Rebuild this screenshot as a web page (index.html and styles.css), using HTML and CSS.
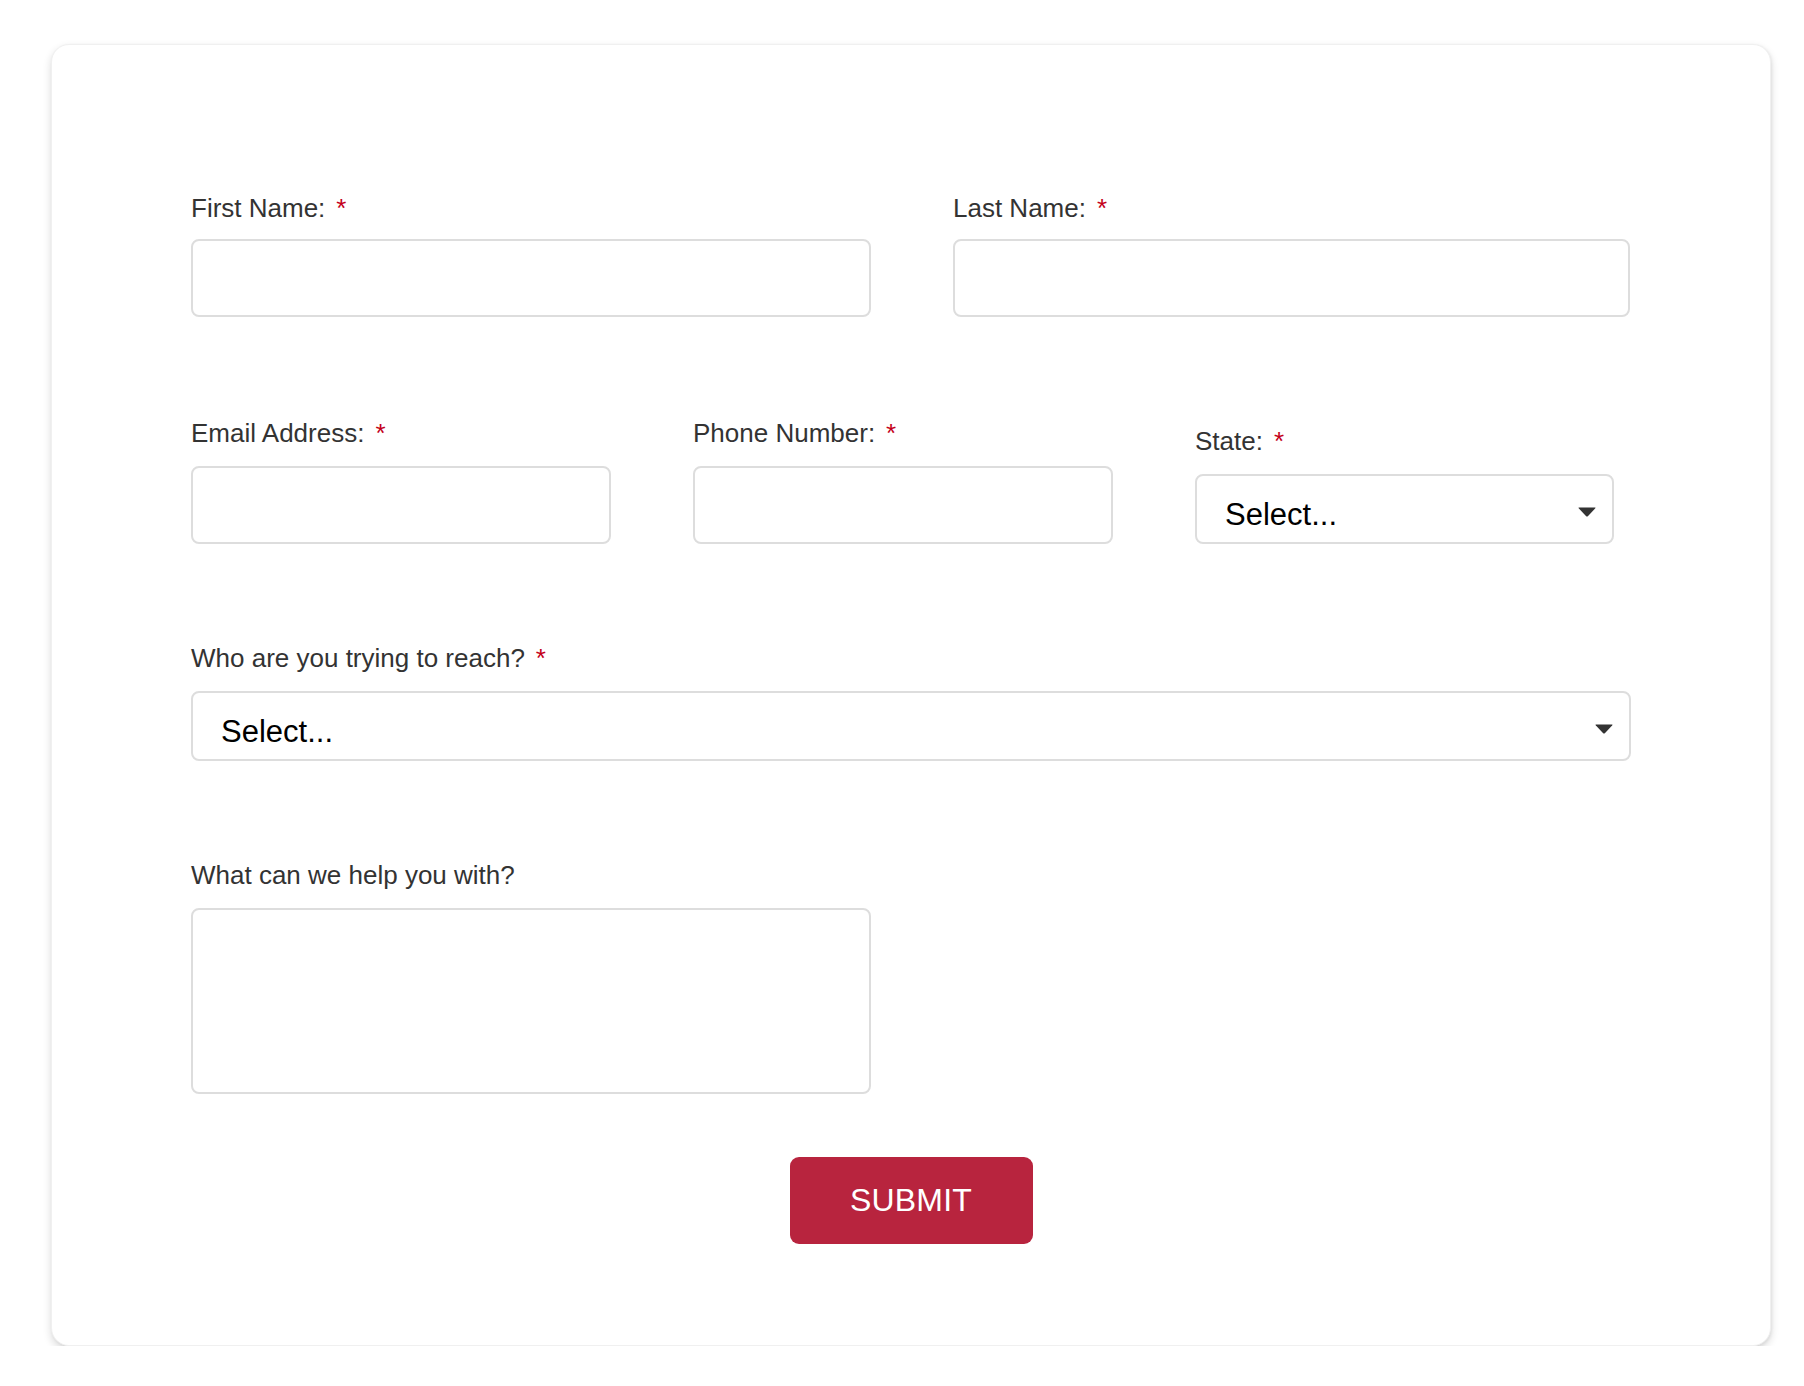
FILE: index.html
```html
<!DOCTYPE html>
<html lang="en">
<head>
<meta charset="utf-8">
<title>Contact Form</title>
<link rel="stylesheet" href="styles.css">
</head>
<body>
<form class="card">
  <div class="row row-two">
    <div class="field">
      <label class="label">First Name:<span class="req">*</span></label>
      <input class="input" type="text">
    </div>
    <div class="field">
      <label class="label">Last Name:<span class="req">*</span></label>
      <input class="input" type="text">
    </div>
  </div>
  <div class="row row-three">
    <div class="field">
      <label class="label">Email Address:<span class="req">*</span></label>
      <input class="input" type="email">
    </div>
    <div class="field">
      <label class="label">Phone Number:<span class="req">*</span></label>
      <input class="input" type="tel">
    </div>
    <div class="field">
      <label class="label">State:<span class="req">*</span></label>
      <div class="select-wrap">
        <select class="select"><option>Select...</option></select>
        <svg class="arrow" width="18" height="10" viewBox="0 0 18 10"><path d="M1 0.5 H17 Q18 0.5 17.3 1.3 L9.8 9.2 Q9 10 8.2 9.2 L0.7 1.3 Q0 0.5 1 0.5 Z" fill="#333"/></svg>
      </div>
    </div>
  </div>
  <div class="row row-one">
    <div class="field">
      <label class="label">Who are you trying to reach?<span class="req">*</span></label>
      <div class="select-wrap">
        <select class="select"><option>Select...</option></select>
        <svg class="arrow" width="18" height="10" viewBox="0 0 18 10"><path d="M1 0.5 H17 Q18 0.5 17.3 1.3 L9.8 9.2 Q9 10 8.2 9.2 L0.7 1.3 Q0 0.5 1 0.5 Z" fill="#333"/></svg>
      </div>
    </div>
  </div>
  <div class="row row-half">
    <div class="field">
      <label class="label">What can we help you with?</label>
      <textarea class="textarea"></textarea>
    </div>
  </div>
  <div class="actions">
    <button class="submit" type="button">SUBMIT</button>
  </div>
</form>
</body>
</html>
```

FILE: styles.css
```css
html, body {
  margin: 0;
  padding: 0;
  background: #ffffff;
}

body {
  font-family: "Liberation Sans", Arial, Helvetica, sans-serif;
  padding: 44px 0 0 51px;
}

.card {
  box-sizing: border-box;
  width: 1720px;
  height: 1302px;
  margin: 0;
  padding: 148px 139px 101px 139px;
  background: #ffffff;
  border: 1px solid #f0f0f0;
  border-radius: 18px;
  box-shadow: 0 4px 8px rgba(0, 0, 0, 0.14), 1px 1px 3px rgba(0, 0, 0, 0.06);
}

.row {
  display: grid;
  align-items: end;
  margin-bottom: 99px;
}

.row-two {
  grid-template-columns: 680px 677px;
  column-gap: 82px;
}

.row-three {
  grid-template-columns: 420px 420px 419px;
  column-gap: 82px;
}

.row-one {
  grid-template-columns: 1440px;
}

.row-half {
  grid-template-columns: 680px;
  margin-bottom: 0;
}

.field {
  display: flex;
  flex-direction: column;
}

.label {
  font-size: 26px;
  line-height: 30px;
  color: #333333;
  margin-bottom: 18px;
}

.row-two .label {
  margin-bottom: 16px;
}

.row-two .input {
  margin-bottom: 2px;
}

.req {
  color: #c4001a;
  margin-left: 11px;
}

.input {
  box-sizing: border-box;
  height: 78px;
  width: 100%;
  margin: 0;
  border: 2px solid #dddddd;
  border-radius: 8px;
  background: #ffffff;
  padding: 0 20px;
  font-family: inherit;
  font-size: 26px;
  outline: none;
}

.select-wrap {
  position: relative;
  width: 100%;
}

.select {
  box-sizing: border-box;
  display: block;
  width: 100%;
  height: 70px;
  margin: 0;
  -webkit-appearance: none;
  appearance: none;
  border: 2px solid #dddddd;
  border-radius: 8px;
  background: #ffffff;
  color: #000000;
  font-family: inherit;
  font-size: 31px;
  padding: 10px 50px 0 28px;
  outline: none;
}

.arrow {
  position: absolute;
  right: 18px;
  top: 33px;
  pointer-events: none;
}

.textarea {
  box-sizing: border-box;
  display: block;
  width: 100%;
  height: 186px;
  margin: 0;
  border: 2px solid #dddddd;
  border-radius: 8px;
  background: #ffffff;
  resize: none;
  font-family: inherit;
  font-size: 26px;
  outline: none;
}

.actions {
  display: flex;
  justify-content: center;
  margin-top: 63px;
}

.submit {
  box-sizing: border-box;
  width: 243px;
  height: 87px;
  border: none;
  border-radius: 9px;
  background: #b8243e;
  color: #ffffff;
  font-family: inherit;
  font-size: 32px;
  letter-spacing: 0.2px;
  cursor: pointer;
  padding: 0;
}
```
